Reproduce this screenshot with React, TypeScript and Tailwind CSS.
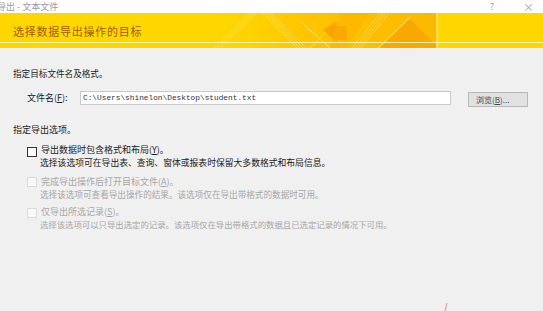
import React from "react";

const cjk = { fontFamily: '"Noto Sans CJK SC", "Noto Sans", sans-serif' };

function HeaderArt() {
  return (
    <svg className="absolute left-0 top-0" width="543" height="35" viewBox="0 0 543 35">
      <defs>
        <linearGradient id="g1" x1="0" x2="1" y1="0" y2="0">
          <stop offset="0" stopColor="#ffd400" stopOpacity="0" />
          <stop offset="0.45" stopColor="#ffc400" stopOpacity="1" />
          <stop offset="1" stopColor="#fbb800" stopOpacity="1" />
        </linearGradient>
      </defs>
      <rect x="200" y="0" width="237" height="35" fill="url(#g1)" />
      {[0, 3, 6, 9].map((d) => (
        <line key={"a" + d} x1={262 + d} y1={0} x2={297 + d} y2={35} stroke="#fff3a0" strokeOpacity="0.55" strokeWidth="0.8" />
      ))}
      {[0, 3, 6].map((d) => (
        <line key={"b" + d} x1={215 + d} y1={35} x2={250 + d} y2={0} stroke="#fff3a0" strokeOpacity="0.45" strokeWidth="0.8" />
      ))}
      <line x1="300" y1="8" x2="330" y2="35" stroke="#fff6c0" strokeOpacity="0.8" strokeWidth="0.8" />
      <line x1="310" y1="35" x2="340" y2="5" stroke="#fff6c0" strokeOpacity="0.7" strokeWidth="0.8" />
      <polygon points="323,17 337,8 337,13 347,13 347,27 337,27 337,30" fill="#f5a000" opacity="0.85" />
      <polygon points="338,0 370,0 345,35 330,35" fill="#ffb000" opacity="0.45" />
      {[0, 3, 6, 9].map((d) => (
        <line key={"c" + d} x1={352 + d} y1={35} x2={380 + d} y2={0} stroke="#fff3a0" strokeOpacity="0.5" strokeWidth="0.8" />
      ))}
      <polygon points="380,35 410,6 437,33 437,35" fill="#f7a300" opacity="0.75" />
      <line x1="378" y1="35" x2="410" y2="4" stroke="#fff6c0" strokeOpacity="0.8" strokeWidth="0.8" />
      <line x1="437" y1="0" x2="437" y2="35" stroke="#fff6c8" strokeWidth="1" />
      <line x1="0" y1="29.5" x2="543" y2="29.5" stroke="#fff4b0" strokeWidth="1.2" />
    </svg>
  );
}

export default function App() {
  return (
    <div className="w-[543px] h-[311px] bg-[#f0f0f0] overflow-hidden relative" style={cjk}>
      {/* title bar */}
      <div className="h-[13px] bg-white flex items-center">
        <span className="text-[9px] leading-[12px] text-[#9a9a9a] -ml-[3px]">导出 - 文本文件</span>
        <span className="ml-auto text-[9px] leading-[12px] text-[#a0a0a0]">?</span>
        <span className="ml-[29px] mr-[9px] text-[11px] leading-[12px] text-[#a0a0a0]">×</span>
      </div>
      {/* header */}
      <div className="h-[35px] bg-[#ffd700] relative">
        <HeaderArt />
        <div className="relative pl-[13px] pt-[11px] text-[11px] leading-[14px] tracking-[0.75px] text-[#a55a00]">
          选择数据导出操作的目标
        </div>
      </div>
      {/* body */}
      <div className="flex flex-col text-[9px] leading-[12px] text-[#1a1a1a]">
        <div className="mt-[19px] pl-[13px] text-[8.6px]">指定目标文件名及格式。</div>
        <div className="mt-[12px] flex items-start pl-[27px]">
          <span className="mt-[1px] w-[53px]">文件名(<u>F</u>):</span>
          <div className="w-[371px] h-[14px] bg-white border border-[#c8c8c8] flex items-center pl-[2px]">
            <span className="text-[7.8px] leading-[10px] text-[#333]" style={{ fontFamily: '"Liberation Mono", monospace' }}>
              C:\Users\shinelon\Desktop\student.txt
            </span>
          </div>
          <div className="ml-[17px] mt-[1px] w-[60px] h-[15px] bg-[#e1e1e1] border border-[#b8b8b8] flex items-center pl-[7px] text-[8px] leading-[10px] text-[#444]">
            浏览(<u>B</u>)...
          </div>
        </div>
        <div className="mt-[17px] pl-[13px]">指定导出选项。</div>

        {/* option 1 */}
        <div className="mt-[7px] pl-[27px] flex items-start">
          <div className="mt-[4px] w-[10px] h-[10px] bg-white border border-[#333]" />
          <div className="ml-[4px] leading-[14px]">导出数据时包含格式和布局(<u>Y</u>)。</div>
        </div>
        <div className="pl-[40px] text-[8.8px]">选择该选项可在导出表、查询、窗体或报表时保留大多数格式和布局信息。</div>

        {/* option 2 */}
        <div className="mt-[7px] pl-[27px] flex items-start text-[#a6a6a6]">
          <div className="mt-[1px] w-[10px] h-[10px] bg-[#f8f8f8] border border-[#dadada]" />
          <div className="ml-[4px]">完成导出操作后打开目标文件(<u>A</u>)。</div>
        </div>
        <div className="pl-[40px] text-[#a6a6a6] text-[8.6px]">选择该选项可查看导出操作的结果。该选项仅在导出带格式的数据时可用。</div>

        {/* option 3 */}
        <div className="mt-[6px] pl-[27px] flex items-start text-[#a6a6a6]">
          <div className="mt-[2px] w-[10px] h-[10px] bg-[#f8f8f8] border border-[#dadada]" />
          <div className="ml-[4px]">仅导出所选记录(<u>S</u>)。</div>
        </div>
        <div className="pl-[40px] text-[#a6a6a6] text-[8.4px]">选择该选项可以只导出选定的记录。该选项仅在导出带格式的数据且已选定记录的情况下可用。</div>
      </div>
      <svg className="absolute left-[443px] top-[303px]" width="6" height="8" viewBox="0 0 6 8">
        <line x1="4" y1="0" x2="2" y2="8" stroke="#f08a8a" strokeWidth="1" />
      </svg>
    </div>
  );
}
